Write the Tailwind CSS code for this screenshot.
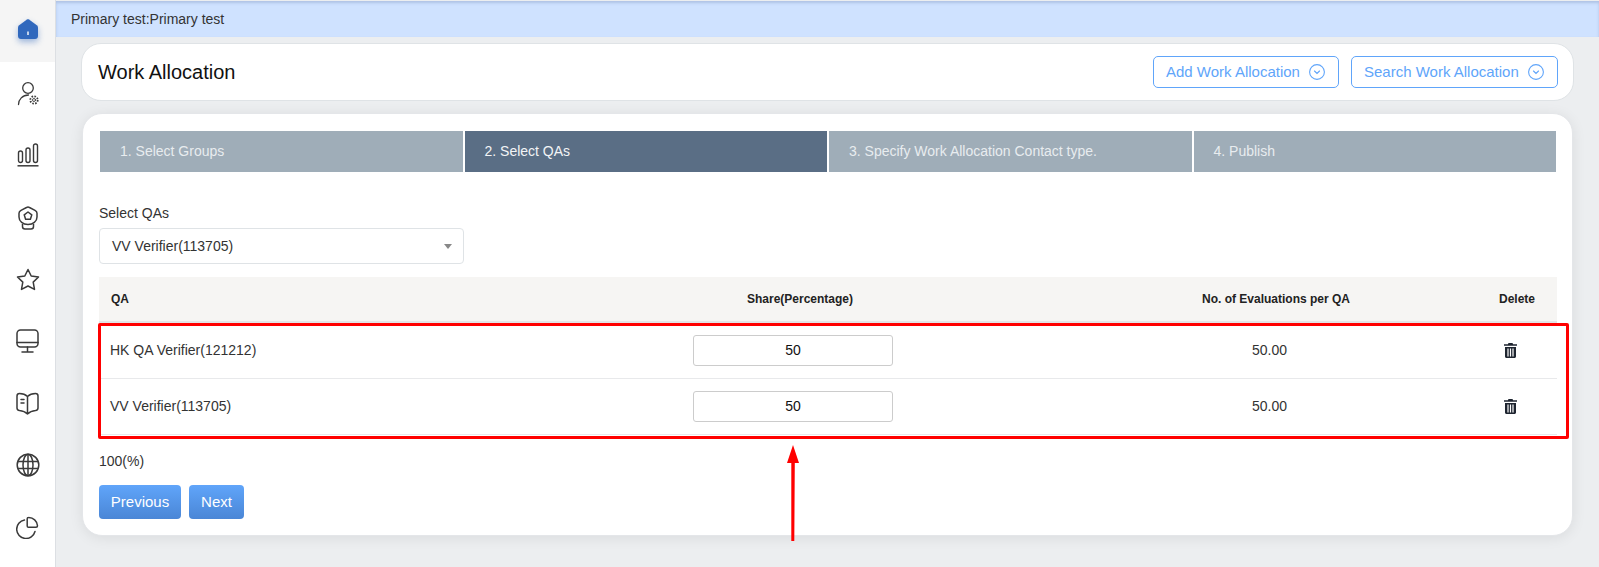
<!doctype html>
<html>
<head>
<meta charset="utf-8">
<script src="https://cdn.jsdelivr.net/npm/@tailwindcss/browser@4"></script>
</head>
<body class="m-0 bg-[#eceef0] font-['Liberation_Sans',Arial,sans-serif] text-[14px] text-[#333]">
<div class="relative flex h-[567px] w-[1599px] overflow-hidden">

  <aside class="flex w-[56px] shrink-0 flex-col border-r border-[#dcdfe3] bg-white">
    <div class="flex h-[62px] items-center justify-center bg-[#f5f5f5]">
      <svg class="-translate-y-[2px] drop-shadow-[0_3px_3px_rgba(49,104,188,0.45)]" width="20" height="20" viewBox="0 0 20 20"><path d="M9 .6 1.200 6.200C.4 6.800 0 7.500 0 8.500V17c0 1.700 1.200 3 3 3h14c1.800 0 3-1.300 3-3V8.500c0-1-.4-1.700-1.200-2.300L11 .6c-.6-.4-1.400-.4-2 0Z" fill="#3068bd"/><rect x="9.300" y="12.500" width="1.400" height="3.500" fill="#fff"/></svg>
    </div>
    <div class="flex h-[62px] items-center justify-center">
      <svg width="24" height="25" viewBox="0 0 24 25" fill="none" stroke="#3a3a3a" stroke-width="1.300" stroke-linecap="round"><circle cx="12" cy="7" r="5.300"/><path d="M2.500 23.500c0-5 4-9.500 10-9.500"/><circle cx="18" cy="19" r="3.700" stroke-width="1.800" stroke-dasharray="1.600 1.300" stroke-linecap="butt"/><circle cx="18" cy="19" r="1.500" stroke-width=".9"/></svg>
    </div>
    <div class="flex h-[62px] items-center justify-center">
      <svg width="22" height="24" viewBox="0 0 22 24" fill="none" stroke="#3a3a3a" stroke-width="1.400"><rect x="1.500" y="8" width="4" height="11.500" rx="2"/><rect x="9" y="5" width="4" height="14.500" rx="2"/><rect x="16.500" y="1" width="4" height="18.500" rx="2"/><path d="M.5 22.800h21" stroke-width="1.500"/></svg>
    </div>
    <div class="flex h-[62px] translate-y-[1px] items-center justify-center">
      <svg width="20" height="24" viewBox="0 0 20 24" fill="none" stroke="#3a3a3a" stroke-width="1.500" stroke-linejoin="round"><path d="M8.500 1.500c1-.6 2-.6 3 0l5.500 2.800c1.200.7 2 1.700 2 3V11c0 4.500-4 7.500-9 7.500S1 15.500 1 11V7.300c0-1.300.8-2.300 2-3Z"/><path d="M10 6l3.800 2.800-1.400 4.400H7.600L6.200 8.800Z"/><path d="M4.500 18v2.500c0 1.500 1 2.500 2.500 2.500h6c1.500 0 2.500-1 2.500-2.500V18"/></svg>
    </div>
    <div class="flex h-[62px] translate-y-[1px] items-center justify-center">
      <svg width="24" height="24" viewBox="0 0 24 24" fill="none" stroke="#3a3a3a" stroke-width="1.500" stroke-linejoin="round"><path d="M12 1.500 15.200 8l7.300 1-5.300 5.100 1.300 7.300L12 18l-6.500 3.400 1.300-7.300L1.500 9l7.300-1Z"/></svg>
    </div>
    <div class="flex h-[62px] items-center justify-center">
      <svg width="23" height="24" viewBox="0 0 23 24" fill="none" stroke="#3a3a3a" stroke-width="1.500" stroke-linecap="round"><rect x="1" y="1" width="21" height="17" rx="3.500"/><path d="M1 13.500h21M11.500 18v5M6 23h11"/></svg>
    </div>
    <div class="flex h-[62px] items-center justify-center">
      <svg width="23" height="23" viewBox="0 0 23 23" fill="none" stroke="#3a3a3a" stroke-width="1.500" stroke-linejoin="round" stroke-linecap="round"><path d="M11.500 4.500C9.500 2.500 7 1.500 3.500 1.500 2 1.500 1 2.500 1 4v12c0 1.500 1 2.300 2.500 2.500 3.500.3 6 1.500 8 3.500 2-2 4.500-3.200 8-3.500 1.500-.2 2.500-1 2.500-2.500V4c0-1.500-1-2.500-2.500-2.500-3.500 0-6 1-8 3ZM11.500 4.500V22"/><path d="M5 7.500h3M5 11h3" /></svg>
    </div>
    <div class="flex h-[62px] items-center justify-center">
      <svg width="24" height="24" viewBox="0 0 24 24" fill="none" stroke="#3a3a3a" stroke-width="1.500"><circle cx="12" cy="12" r="10.800"/><ellipse cx="12" cy="12" rx="5" ry="10.800"/><path d="M2 8.500h20M2 15.500h20M12 1v22"/></svg>
    </div>
    <div class="flex h-[62px] items-center justify-center">
      <svg width="23" height="23" viewBox="0 0 23 23" fill="none" stroke="#3a3a3a" stroke-width="1.500" stroke-linecap="round" stroke-linejoin="round"><path d="M8.500 4A9.300 9.300 0 1 0 19 15.500"/><path d="M12.500 1.500c-.8 0-1.300.5-1.300 1.300V10c0 .8.500 1.300 1.300 1.300h7.500c.8 0 1.500-.6 1.500-1.500a8.800 8.800 0 0 0-9-8.300Z"/></svg>
    </div>
  </aside>

  <main class="min-w-0 flex-1">
    <div class="mt-px flex h-[36px] items-center bg-[#cfe2ff] pl-[15px] shadow-[inset_0_2px_3px_rgba(60,80,130,0.22)] text-[14px]">Primary test:Primary test</div>

    <header class="mt-[6px] ml-[25px] flex h-[58px] w-[1493px] items-center justify-between rounded-[20px] border border-[#dfe3e6] bg-white pr-[15px] pl-[16px]">
      <h1 class="text-[20px] font-normal text-[#111]">Work Allocation</h1>
      <div class="flex gap-[12px]">
        <button class="flex h-[32px] w-[186px] items-center justify-between rounded-[5px] border border-[#60a5fa] bg-white pr-[13px] pl-[12px] text-[15px] text-[#60a5fa]">Add Work Allocation
          <svg width="16" height="16" viewBox="0 0 16 16" fill="none" stroke="#60a5fa" stroke-width="1.100"><circle cx="8" cy="8" r="7.400"/><path d="M5.500 7 8 9.500 10.500 7" stroke-linecap="round"/></svg>
        </button>
        <button class="flex h-[32px] w-[207px] items-center justify-between rounded-[5px] border border-[#60a5fa] bg-white pr-[13px] pl-[12px] text-[15px] text-[#60a5fa]">Search Work Allocation
          <svg width="16" height="16" viewBox="0 0 16 16" fill="none" stroke="#60a5fa" stroke-width="1.100"><circle cx="8" cy="8" r="7.400"/><path d="M5.500 7 8 9.500 10.500 7" stroke-linecap="round"/></svg>
        </button>
      </div>
    </header>

    <section class="mt-[12px] ml-[26px] h-[423px] w-[1491px] rounded-[20px] border border-[#e4e6e9] bg-white pt-[17px] pr-[16px] pl-[17px] shadow-[0_2px_14px_rgba(0,0,0,0.08)]">
      <div class="grid h-[41px] grid-cols-4 gap-[2px] text-[14px] text-[#e8ecef]">
        <div class="flex items-center bg-[#9fadb8] pl-[20px]">1. Select Groups</div>
        <div class="flex items-center bg-[#5a6e85] pl-[20px] text-[#f2f4f6]">2. Select QAs</div>
        <div class="flex items-center bg-[#9fadb8] pl-[20px]">3. Specify Work Allocation Contact type.</div>
        <div class="flex items-center bg-[#9fadb8] pl-[20px]">4. Publish</div>
      </div>

      <div class="-ml-px mt-[31px] h-[20px] leading-[20px]">Select QAs</div>
      <div class="-ml-px mt-[5px] flex h-[36px] w-[365px] items-center justify-between rounded-[4px] border border-[#dfe3e6] pr-[11px] pl-[12px]">
        VV Verifier(113705)
        <span class="h-0 w-0 border-x-[4px] border-t-[5px] border-x-transparent border-t-[#888]"></span>
      </div>

      <div class="-mx-px mt-[13px]">
        <div class="grid h-[46px] grid-cols-[426px_550px_402px_80px] items-center border-b-2 border-[#e3e4e6] bg-[#f6f5f3] text-center text-[12px] font-bold text-[#222]">
          <div class="pl-[12px] text-left">QA</div>
          <div>Share(Percentage)</div>
          <div>No. of Evaluations per QA</div>
          <div>Delete</div>
        </div>
        <div class="grid h-[56px] grid-cols-[426px_550px_402px_80px] items-center border-b border-[#e8e9eb] text-center">
          <div class="pl-[11px] text-left">HK QA Verifier(121212)</div>
          <div class="flex justify-center pr-[14px]"><div class="flex h-[31px] w-[200px] items-center justify-center rounded-[3px] border border-[#ccc] text-[#111]">50</div></div>
          <div class="pr-[13px]">50.00</div>
          <div class="flex justify-center pr-[13px]">
            <svg width="13" height="15" viewBox="0 0 13 15" fill="#1e2530"><path d="M4.500 0h4l.6 1.200H13v1.600H0V1.200h3.900Z"/><path fill-rule="evenodd" d="M1 4h11v9.500c0 .8-.7 1.500-1.500 1.500h-8C1.700 15 1 14.300 1 13.500ZM3.400 5.500v8h1.200v-8Zm2.500 0v8h1.200v-8Zm2.500 0v8h1.200v-8Z"/></svg>
          </div>
        </div>
        <div class="grid h-[56px] grid-cols-[426px_550px_402px_80px] items-center border-b border-[#e8e9eb] text-center">
          <div class="pl-[11px] text-left">VV Verifier(113705)</div>
          <div class="flex justify-center pr-[14px]"><div class="flex h-[31px] w-[200px] items-center justify-center rounded-[3px] border border-[#ccc] text-[#111]">50</div></div>
          <div class="pr-[13px]">50.00</div>
          <div class="flex justify-center pr-[13px]">
            <svg width="13" height="15" viewBox="0 0 13 15" fill="#1e2530"><path d="M4.500 0h4l.6 1.200H13v1.600H0V1.200h3.900Z"/><path fill-rule="evenodd" d="M1 4h11v9.500c0 .8-.7 1.500-1.500 1.500h-8C1.700 15 1 14.300 1 13.500ZM3.400 5.500v8h1.200v-8Zm2.500 0v8h1.200v-8Zm2.500 0v8h1.200v-8Z"/></svg>
          </div>
        </div>
      </div>

      <div class="-ml-px mt-[16px] h-[20px] leading-[20px]">100(%)</div>
      <div class="-ml-px mt-[14px] flex gap-[8px]">
        <button class="h-[34px] w-[82px] rounded-[4px] bg-gradient-to-b from-[#60a5fa] to-[#4a86d6] text-[15px] text-white">Previous</button>
        <button class="h-[34px] w-[55px] rounded-[4px] bg-gradient-to-b from-[#60a5fa] to-[#4a86d6] text-[15px] text-white">Next</button>
      </div>
    </section>
  </main>

  <div class="absolute top-[323px] left-[98px] h-[116px] w-[1471px] rounded-[2px] border-[3px] border-[#ff0000]"></div>
  <svg class="absolute top-[445px] left-[786px]" width="14" height="96" viewBox="0 0 14 96"><path d="M7 0 13 18H8.800L8.300 96H5.300L5.300 18H1Z" fill="#ff0000"/></svg>
</div>
</body>
</html>
